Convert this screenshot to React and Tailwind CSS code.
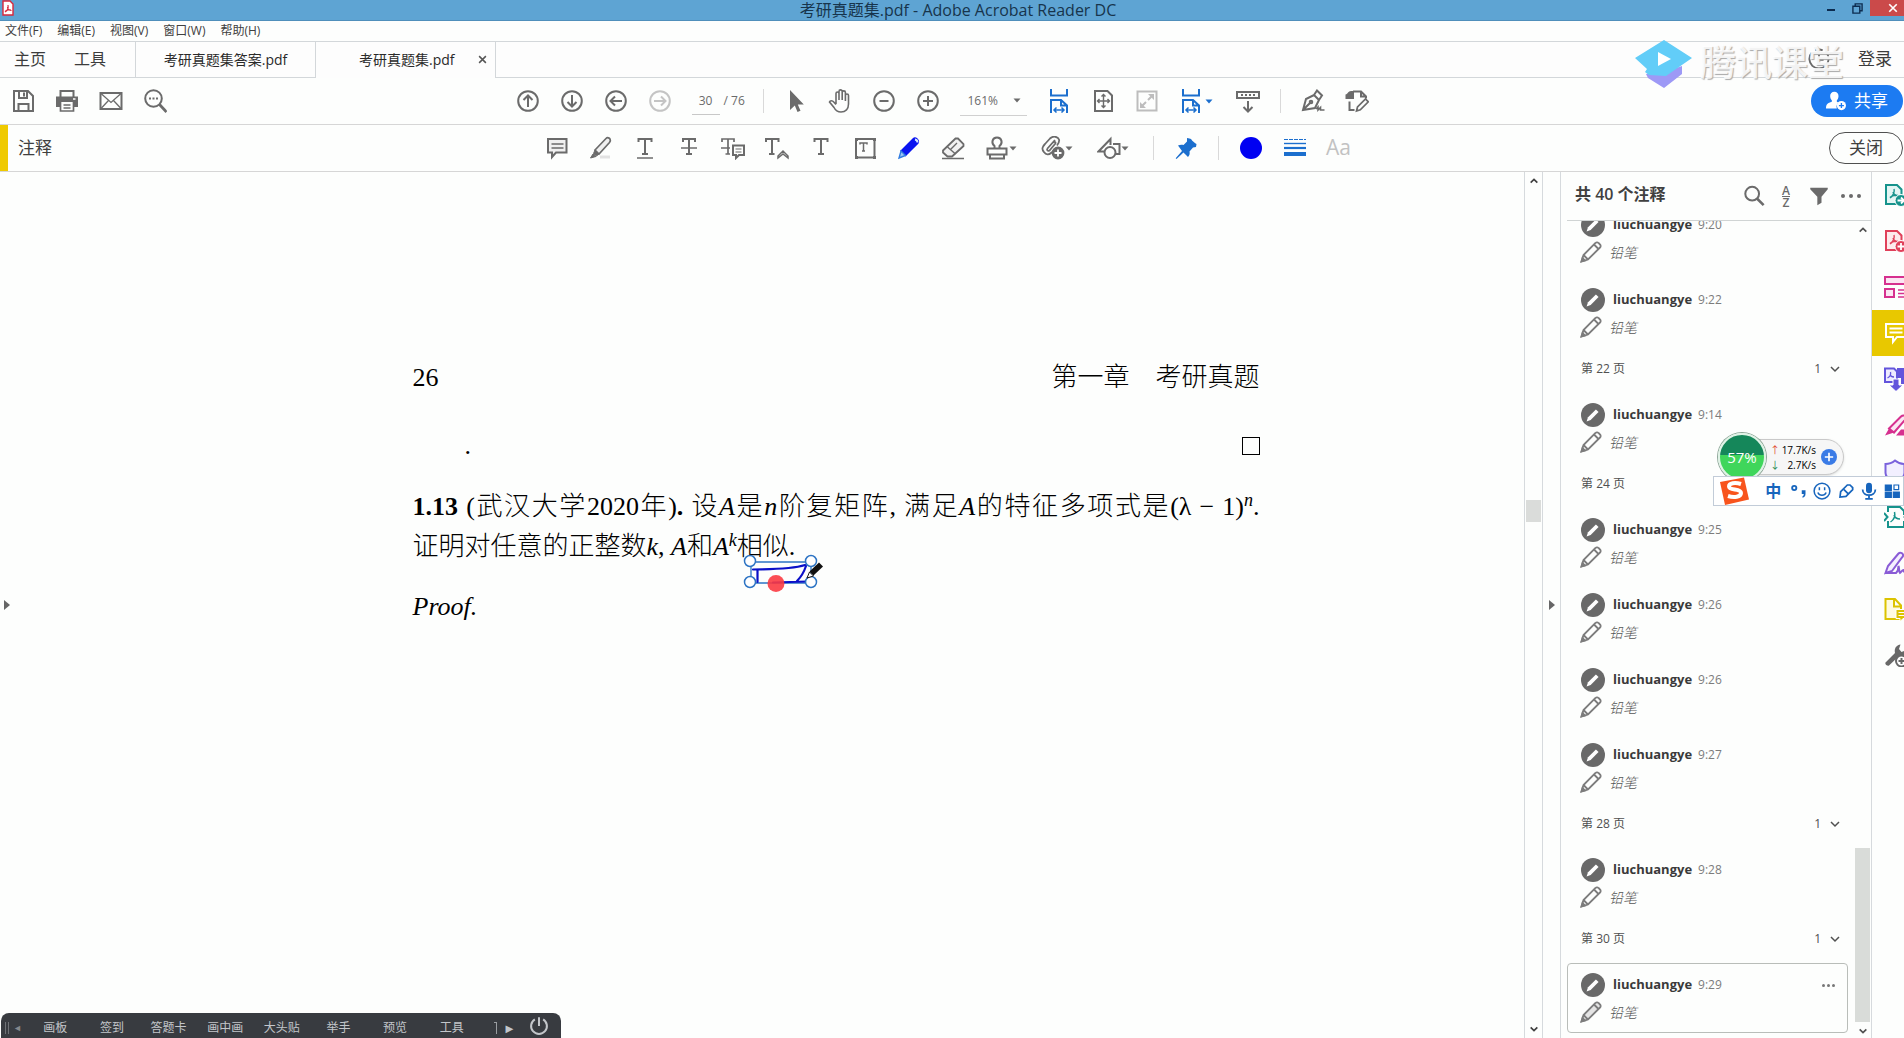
import React, { useState } from 'react';
import clsx from 'clsx';

const menus = ['文件(F)', '编辑(E)', '视图(V)', '窗口(W)', '帮助(H)'];
const classTools = ['画板', '签到', '答题卡', '画中画', '大头贴', '举手', '预览', '工具'];

const commentList = [
  { time: '9:20' },
  { time: '9:22' },
  { page: 22, count: 1 },
  { time: '9:14' },
  { page: 24, count: 1 },
  { time: '9:25' },
  { time: '9:26' },
  { time: '9:26' },
  { time: '9:27' },
  { page: 28, count: 1 },
  { time: '9:28' },
  { page: 30, count: 1 },
  { time: '9:29', selected: true },
];

const Icon = ({ children, className = 'w-6 h-6', width = 2, ...rest }) => (
  <svg
    viewBox="0 0 24 24"
    fill="none"
    stroke="currentColor"
    strokeWidth={width}
    className={clsx('flex-shrink-0', className)}
    aria-hidden="true"
    {...rest}
  >
    {children}
  </svg>
);

const ToolButton = ({ label, className = 'w-11 justify-center', children }) => (
  <button type="button" title={label} aria-label={label} className={clsx('h-11 flex items-center flex-shrink-0', className)}>
    {children}
  </button>
);

const Caret = ({ className = '' }) => (
  <svg viewBox="0 0 8 5" className={clsx('w-2 h-[5px] flex-shrink-0', className)} aria-hidden="true">
    <path d="M0.5 0.5h7L4 4.5z" fill="currentColor" />
  </svg>
);

const Divider = () => <span className="w-px h-6 mx-2.5 bg-[#d9d9d9] flex-shrink-0" />;

const Chevron = ({ up, className = 'w-3 h-3', width = 4 }) => (
  <Icon className={className} width={width}>
    <path d={up ? 'M4 16l8-8 8 8' : 'M4 8l8 8 8-8'} />
  </Icon>
);

const CircleIcon = ({ d, className }) => (
  <Icon className={clsx('w-6 h-6', className)}>
    <circle cx="12" cy="12" r="9.8" />
    <path d={d} />
  </Icon>
);

const FitWidthIcon = () => (
  <Icon className="w-6 h-6 text-[#1c6fce]">
    <path d="M4 0v6.5h16V0" />
    <path d="M4 24V11h10l6 5.500V24M14 11v5.500h6" />
    <path d="M7.500 21h9M9.500 18.500L7 21l2.500 2.500M14.500 18.500L17 21l-2.500 2.500" strokeWidth="1.500" />
  </Icon>
);

const PencilIcon = ({ filled }) => (
  <Icon className="w-6 h-6 text-[#7c7c7c]" width={1.8}>
    <path d="M2.500 21.500l2-6.500L16.500 3a2 2 0 0 1 3 0l1.500 1.500a2 2 0 0 1 0 3L9 19.500z" fill={filled ? '#e4e4e4' : 'none'} />
    <path d="M4.500 15L9 19.500M15 4.500l4.500 4.500" />
    <path d="M2.500 21.500l1-3.500 2.500 2.500z" fill="currentColor" />
  </Icon>
);

const TitleBar = () => (
  <header className="h-[21px] flex-shrink-0 flex bg-[#5ea4d3] border-b border-[#4f8fbb] text-[#17344c]">
    <div className="flex-1 pl-0.5">
      <svg viewBox="0 0 12 16" className="w-3 h-4" aria-hidden="true">
        <path d="M1 1h7l3 3v11H1z" fill="#fff" stroke="#d8273b" strokeWidth="1.400" />
        <path d="M3 12c2-1 3.500-4 3-7M5.500 7c0 2 2 3.500 4 3.500M3 11.500c1.500-1.500 4-2 6-1.500" fill="none" stroke="#d8273b" strokeWidth="1.200" />
      </svg>
    </div>
    <h1 className="pl-2.5 text-[16px] leading-5 whitespace-nowrap">考研真题集.pdf - Adobe Acrobat Reader DC</h1>
    <div className="flex-1 flex justify-end items-start">
      <button type="button" aria-label="最小化" className="w-[26px] h-4 flex justify-center items-end pb-[5px]">
        <span className="w-2 h-[2px] bg-[#0c2c50]" />
      </button>
      <button type="button" aria-label="还原" className="w-[26px] h-4 flex justify-center items-center">
        <Icon className="w-[11px] h-[11px] text-[#0c2c50]" width={3}>
          <path d="M2 7h15v15H2zM7 7V2h15v15h-5" />
        </Icon>
      </button>
      <button type="button" aria-label="关闭窗口" className="w-[34px] h-4 pl-[18px] bg-[#cb4a4a] text-white flex items-center">
        <Icon className="w-2.5 h-2.5" width={4}>
          <path d="M3 3l18 18M21 3L3 21" />
        </Icon>
      </button>
    </div>
  </header>
);

const TabBar = () => (
  <div className="h-9 flex-shrink-0 flex text-[#3c3c3c] bg-[#fdfdfd]">
    <nav className="w-[136px] flex items-center pl-3.5 pb-0.5 gap-7 border-b border-r border-[#d3d7da] text-[16px]">
      <button type="button">主页</button>
      <button type="button">工具</button>
    </nav>
    <button type="button" className="w-[180px] border-b border-r border-[#d3d7da] text-[14px] text-[#2a2a2a]">
      考研真题集答案.pdf
    </button>
    <div className="w-[180px] pl-[43px] pb-0.5 flex items-center border-r border-[#d3d7da] text-[14px] text-[#2a2a2a]">
      <button type="button">考研真题集.pdf</button>
      <button type="button" aria-label="关闭标签" className="ml-auto mr-2 text-[#555]">
        <Icon className="w-[9px] h-[9px]" width={4}>
          <path d="M3 3l18 18M21 3L3 21" />
        </Icon>
      </button>
    </div>
    <div className="flex-1 flex justify-end items-center gap-7 pr-3 pb-0.5 border-b border-[#d3d7da]">
      <button type="button" aria-label="通知">
        <Icon className="w-[22px] h-[22px] text-[#6a6a6a]">
          <path d="M4 5a10.500 10.500 0 1 0 16 0M8 2.500a10 10 0 0 1 8 0" />
          <path d="M12 7v6h5" />
        </Icon>
      </button>
      <button type="button" className="text-[17px]">登录</button>
    </div>
  </div>
);

const MainToolbar = () => {
  const [page, setPage] = useState('30');

  return (
    <div className="h-[47px] flex-shrink-0 flex items-center border-b border-[#d6d6d6] text-[#6b6b6b]">
      <div className="flex-1 flex items-center pl-px">
        <ToolButton label="保存">
          <Icon>
            <path d="M3 2h14l5 5v15H3zM7.500 22v-7h10v7M8 2v7h8V2M13 3.500v4" />
          </Icon>
        </ToolButton>
        <ToolButton label="打印">
          <Icon>
            <path d="M5.500 8V2h13v6" />
            <path d="M1 7.500h22V18h-4v-5H5v5H1z" fill="currentColor" stroke="none" />
            <path d="M5.500 13v9h13v-9M8.500 16h7M8.500 19h7" strokeWidth="1.700" />
            <path d="M18 10h2.500" stroke="#fff" strokeWidth="1.500" />
          </Icon>
        </ToolButton>
        <ToolButton label="邮件">
          <Icon>
            <path d="M1.500 4h21v16h-21z" />
            <path d="M2 4.500l10 9 10-9M2 19.500l7.500-8M22 19.500l-7.500-8" strokeWidth="1.300" />
          </Icon>
        </ToolButton>
        <ToolButton label="查找">
          <Icon>
            <circle cx="10.500" cy="9.500" r="8.300" />
            <path d="M16.500 15.500l7 7.500" strokeWidth="2.800" />
            <path d="M6 9.500h2M9.500 9.500h2M13 9.500h2" />
          </Icon>
        </ToolButton>
      </div>

      <div className="flex items-center pr-5">
        <ToolButton label="上一页"><CircleIcon d="M12 18V6.500M7.500 11L12 6.500l4.500 4.500" /></ToolButton>
        <ToolButton label="下一页"><CircleIcon d="M12 6v11.500M7.500 13l4.500 4.500 4.500-4.500" /></ToolButton>
        <ToolButton label="后退"><CircleIcon d="M18 12H6.500M11 7.500L6.500 12l4.500 4.500" /></ToolButton>
        <ToolButton label="前进"><CircleIcon className="text-[#c4c4c4]" d="M6 12h11.500M13 7.500l4.500 4.500-4.500 4.500" /></ToolButton>
        <div className="w-[71px] pl-2.5 flex items-center gap-1 text-[12px]">
          <input
            aria-label="页码"
            value={page}
            onChange={(e) => setPage(e.target.value)}
            className="w-7 h-7 text-center border-b border-[#c8c8c8] focus:outline-none"
          />
          <span>/ 76</span>
        </div>
        <Divider />
        <ToolButton label="选择">
          <Icon stroke="none">
            <path d="M6 1v20l4.800-4.500L13.500 23l3-1.200-2.700-6.300h6z" fill="currentColor" />
          </Icon>
        </ToolButton>
        <ToolButton label="手形">
          <Icon width={1.6}>
            <path d="M8 15V4.500a1.500 1.500 0 0 1 3 0V11M11 11V2.500a1.500 1.500 0 0 1 3.200 0V11M14.200 11V3.500a1.500 1.500 0 0 1 3.200 0V12M17.400 12V6.500a1.500 1.500 0 0 1 3.100 0V15c0 5-3 8-7.500 8-3.500 0-5.500-1.500-7-4.500L1.500 13c.5-1.700 3-1.700 4.300 0L8 15.500" />
          </Icon>
        </ToolButton>
        <ToolButton label="缩小"><CircleIcon d="M7.500 12h9" /></ToolButton>
        <ToolButton label="放大"><CircleIcon d="M7 12h10M12 7v10" /></ToolButton>
        <label className="relative w-[67px] mx-2.5 flex items-center text-[12px] border-b border-[#d0d0d0]">
          <select aria-label="缩放" defaultValue="161%" className="appearance-none w-full h-7 pl-2 bg-transparent focus:outline-none">
            <option>100%</option>
            <option>161%</option>
            <option>200%</option>
          </select>
          <Caret className="absolute right-1.5 pointer-events-none" />
        </label>
        <ToolButton label="适合宽度"><FitWidthIcon /></ToolButton>
        <ToolButton label="适合页面">
          <Icon>
            <path d="M4 2h12.500L21 6.500V22H4z" />
            <path d="M12.500 6v12M6.500 12h12M10.500 7.500l2-2 2 2M10.500 16.500l2 2 2-2M8.500 10l-2 2 2 2M16.500 10l2 2-2 2" strokeWidth="1.400" />
          </Icon>
        </ToolButton>
        <ToolButton label="全屏">
          <Icon className="w-6 h-6 text-[#bdbdbd]">
            <path d="M2.500 2.500h19v19h-19z" />
            <path d="M13 11l5-5M6 18l5-5" />
            <path d="M13 5h6v6zM5 13v6h6z" fill="currentColor" stroke="none" />
          </Icon>
        </ToolButton>
        <ToolButton label="页面显示" className="w-[57px] pl-2.5 gap-0.5">
          <FitWidthIcon />
          <Caret className="text-[#1c6fce]" />
        </ToolButton>
        <ToolButton label="滚动">
          <Icon>
            <path d="M1 3h22v6H1z" />
            <path d="M5 6h2M9 6h2M13 6h2M17 6h2M12 12v10M7.500 18l4.500 4.500 4.500-4.500" />
          </Icon>
        </ToolButton>
        <Divider />
        <ToolButton label="签名">
          <Icon>
            <path d="M2 21l3-11 8-4 5 5-4 8zM13 6l3-4.500 5 5-3 4.500M2 21l7.500-7.500" />
            <circle cx="10" cy="13" r="1.300" />
            <path d="M15 20l2-2v3l2.500-2.500v2.500h4" strokeWidth="1.600" />
          </Icon>
        </ToolButton>
        <ToolButton label="编辑页面">
          <Icon>
            <path d="M0.500 5.500C3 5 3 2 6 2h3v8H0.500z" fill="currentColor" stroke="none" />
            <path d="M8 2.500h8l5 5v2M16 2.500v5h5M4.500 12.500V21h5" />
            <path d="M11.500 22l1-4 8-8 2.800 2.800-8 8z" strokeWidth="1.700" />
          </Icon>
        </ToolButton>
      </div>

      <div className="flex-1 flex justify-end pr-px">
        <button type="button" className="w-[92px] h-8 rounded-full bg-[#1c7bf2] text-white text-[17px] flex items-center justify-center gap-2">
          <Icon className="w-5 h-5" stroke="none">
            <path d="M10 1c3 0 5 2 5 5 0 2-.8 4-2 5v2l2 1c-2 1.500-3 4-2 7H0c0-5 2-6.500 7-8v-2C5.800 10 5 8 5 6c0-3 2-5 5-5z" fill="#fff" />
            <circle cx="18.500" cy="17.500" r="5.500" fill="#fff" />
            <path d="M18.500 14.500v6M15.500 17.500h6" stroke="#1c7bf2" strokeWidth="1.600" />
          </Icon>
          共享
        </button>
      </div>
    </div>
  );
};

const CommentToolbar = () => (
  <div className="h-[47px] flex-shrink-0 flex items-center border-b border-[#d6d6d6] text-[#6b6b6b]">
    <div className="flex-1 self-stretch flex items-center border-l-8 border-[#efca00]">
      <h2 className="pl-2.5 text-[17px] text-[#404040]">注释</h2>
    </div>

    <div className="flex items-center pr-4">
      <ToolButton label="添加附注">
        <Icon>
          <path d="M3 3h18.500v13.500H11L7 21v-4.500H3z" fill="#f0f0f0" />
          <path d="M6.500 8h12M6.500 12h12" strokeWidth="1.500" />
        </Icon>
      </ToolButton>
      <ToolButton label="高亮文本">
        <Icon>
          <path d="M6 14L17 2.500c1.500-1.500 3.500-.5 4 .5.800 1.500.3 2.500-.5 3.500L10 18z" fill="#f0f0f0" strokeWidth="1.700" />
          <path d="M6 14l4 4-2.500 2-3-2.500zM4 18l3 2.500-5.500 1.500z" fill="currentColor" strokeWidth="1" />
          <path d="M11 21h10" stroke="#e2e2e2" strokeWidth="3" />
        </Icon>
      </ToolButton>
      <ToolButton label="下划线">
        <Icon>
          <path d="M5.500 6V3h13v3M12 3v15M9 18h6" />
          <path d="M4 22h16" strokeWidth="1.500" />
        </Icon>
      </ToolButton>
      <ToolButton label="删除线">
        <Icon>
          <path d="M6 6V3h12v3M12 3v15M9 18h6" />
          <path d="M4 12h16" strokeWidth="1.500" />
        </Icon>
      </ToolButton>
      <ToolButton label="替换文本">
        <Icon>
          <path d="M1 6V3h12v3M7 3v15M4.500 18H9M0 12h9" strokeWidth="1.700" />
          <path d="M12 9.500h11V19h-5l-3 3v-3h-3z" />
          <path d="M14.500 13h6M14.500 16h6" strokeWidth="1.200" />
        </Icon>
      </ToolButton>
      <ToolButton label="插入文本">
        <Icon>
          <path d="M1 6V3h12.500v3M7 3v15M4 18h5.500" />
          <path d="M13 20l5-5 5 5v2l-5-4-5 4z" strokeWidth="1.500" />
        </Icon>
      </ToolButton>
      <ToolButton label="添加文本">
        <Icon>
          <path d="M5.500 6V3h13v3M12 3v15M9 18h6" />
        </Icon>
      </ToolButton>
      <ToolButton label="文本框">
        <Icon>
          <path d="M3 3h18.500v18.500H3z" />
          <path d="M7 8.500V7h7v1.500M10.500 7v8M9 15h3" strokeWidth="1.500" />
          <path d="M2 2h3v3H2zM20 2h3v3h-3zM2 20h3v3H2zM20 20h3v3h-3z" fill="currentColor" stroke="none" />
        </Icon>
      </ToolButton>
      <ToolButton label="铅笔">
        <Icon className="w-6 h-6 text-[#0a14f0]" width={1.4}>
          <path d="M4 15L16.500 2.500c2-2 6 2 4.500 4.500L8.500 19.500z" fill="currentColor" />
          <path d="M4 15l4.500 4.500L2 22z" fill="#9cc4f5" stroke="#2f7be0" />
          <path d="M18 3.500a3 3 0 0 1 2.500 3" stroke="#d5e8ff" strokeWidth="2" />
        </Icon>
      </ToolButton>
      <ToolButton label="橡皮擦">
        <Icon width={1.8}>
          <path d="M2 14.500L14.500 2.500h2.500l5.500 5.500v2L11 20.500H6.500L2 16.500z" fill="#f2f2f2" />
          <path d="M6.500 11l8 7M9 14l7-7M1 22.500h22" strokeWidth="1.400" />
        </Icon>
      </ToolButton>
      <ToolButton label="图章" className="w-14 pl-2.5">
        <Icon>
          <path d="M9.500 12.500V10C6 7.500 7 1.500 12 1.500S18 7.500 14.500 10v2.500M2.500 12.500h19v6h-19zM5 18.500v4h14v-4" />
        </Icon>
        <Caret />
      </ToolButton>
      <ToolButton label="附件" className="w-14 pl-2.5">
        <Icon width={1.8}>
          <path d="M6 13l8-9M3 16C0 13 2 10 4 8l5-5.500c3-3 8-2 9 1 .7 2-.5 4-2 6M3 16c2 3 5 3 7 1l1-1M6 13c0 2 2 2.500 3 1l5-6c1.500-2-.5-3-2-1.500" />
          <circle cx="17" cy="17" r="5.500" fill="currentColor" />
          <path d="M17 13.500v7M13.500 17h7" stroke="#fff" />
        </Icon>
        <Caret />
      </ToolButton>
      <ToolButton label="绘图" className="w-14 pl-2.5">
        <Icon>
          <path d="M8 15.500H1.500L13.500 3v6M16 8h6.500v10H19" />
          <circle cx="13" cy="16.500" r="5.500" />
        </Icon>
        <Caret />
      </ToolButton>
      <Divider />
      <ToolButton label="保持选定">
        <Icon className="w-6 h-6 text-[#1c6fce]" stroke="none">
          <path d="M13 2c2 0 3 1 4 1 1.500 2.500 4 4 5.500 5l-.5 3-3 .5-3.500 4c.5 2 0 4-1.500 5.500l-4.500-4.500-7 6.500-.8-.8 6.300-7.200L4 9.500C6 8.500 8 8.500 9.500 9L13 5.500z" fill="currentColor" />
        </Icon>
      </ToolButton>
      <Divider />
      <ToolButton label="颜色">
        <span className="w-[22px] h-[22px] rounded-full bg-[#0000f2]" />
      </ToolButton>
      <ToolButton label="线宽">
        <Icon className="w-6 h-6 text-[#1c6fce]">
          <path d="M1 3.500h22" strokeWidth="1" strokeDasharray="4 1" />
          <path d="M1 7.500h22" strokeWidth="1.400" />
          <path d="M1 12h22" strokeWidth="2.200" />
          <path d="M1 18h22" strokeWidth="4" />
        </Icon>
      </ToolButton>
      <ToolButton label="文本属性">
        <span className="text-[21px] text-[#c2c2c2]">Aa</span>
      </ToolButton>
    </div>

    <div className="flex-1 flex justify-end pr-px">
      <button type="button" className="w-[74px] h-8 rounded-full border border-[#505050] text-[17px] text-[#404040]">关闭</button>
    </div>
  </div>
);

/* Free-hand mark with its selection handles and the pencil cursor */
const InkAnnotation = () => (
  <svg viewBox="0 0 84 42" className="absolute left-[330px] top-[26px] w-[84px] h-[42px]" aria-hidden="true">
    <path d="M8 9h60v21H8z" fill="none" stroke="#2d74c4" strokeWidth="1.300" />
    <path d="M10 16.500c18-.5 38 0 52-4.500M14.500 17v12M63 13c-2 6-5 11-9 15M30 29.500l34-1" fill="none" stroke="#0b10c8" strokeWidth="2.200" strokeLinecap="round" />
    <g fill="#fff" stroke="#2d74c4" strokeWidth="1.500">
      <circle cx="7" cy="8" r="5.500" />
      <circle cx="68" cy="8" r="5.500" />
      <circle cx="7" cy="29" r="5.500" />
      <circle cx="68" cy="29" r="5.500" />
    </g>
    <circle cx="33" cy="30.500" r="8.500" fill="#fb3b42" fillOpacity=".9" />
    <path d="M64 25l2.500-6 4 4z" fill="#fff" stroke="#111" strokeWidth="1" />
    <path d="M66.500 18.500L76 9.500l4 4-9.500 9z" fill="#111" />
  </svg>
);

const DocumentPage = () => (
  <article className="flex-1 min-w-0 pt-[186px] pl-[134px] text-black font-['Liberation_Serif','Noto_Sans_CJK_SC',serif]">
    <div className="w-[847px] mx-auto text-[26px] leading-10 font-light">
      <div className="flex justify-between">
        <span>26</span>
        <span>第一章&emsp;考研真题</span>
      </div>
      <div className="flex justify-between items-center pt-7 pl-[52px]">
        <span>.</span>
        <span className="w-[18px] h-[18px] border-[1.5px] border-black" />
      </div>
      <p className="pt-[21px] [text-align-last:justify] whitespace-nowrap">
        <b className="font-bold">1.13</b> (武汉大学2020年)<b className="font-bold">.</b> 设<i>A</i>是<i>n</i>阶复矩阵, 满足<i>A</i>的特征多项式是(λ − 1)<sup className="text-[18px] leading-none"><i>n</i></sup>.
      </p>
      <div className="relative">
        <p className="whitespace-nowrap">
          证明对任意的正整数<i>k</i>, <i>A</i>和<i>A</i><sup className="text-[18px] leading-none"><i>k</i></sup>相似.
        </p>
        <InkAnnotation />
      </div>
      <p className="pt-5 italic">Proof.</p>
    </div>
  </article>
);

const Comment = ({ time, selected }) => (
  <li className={clsx('h-[70px] mb-[5px] mr-[7px] flex-shrink-0 rounded border pl-[13px] pt-[9px]', selected ? 'border-[#b9bdb9]' : 'border-transparent')}>
    <div className="h-6 flex items-center">
      <span className="w-6 h-6 rounded-full bg-[#696969] flex items-center justify-center">
        <Icon className="w-[14px] h-[14px]" stroke="none">
          <path d="M1 23l2.500-7L17 2.500 21.500 7 8 20.500z" fill="#fff" />
        </Icon>
      </span>
      <b className="ml-2 text-[13px] text-[#3a3a3a]">liuchuangye</b>
      <span className="ml-1.5 text-[12px] text-[#7c7c7c]">{time}</span>
      {selected && (
        <button type="button" aria-label="更多选项" className="ml-auto mr-[9px] w-5 h-3 flex items-center justify-center gap-0.5">
          <i className="w-[3px] h-[3px] rounded-full bg-[#777]" />
          <i className="w-[3px] h-[3px] rounded-full bg-[#777]" />
          <i className="w-[3px] h-[3px] rounded-full bg-[#777]" />
        </button>
      )}
    </div>
    <div className="h-6 mt-[3px] flex items-center">
      <span className="-ml-0.5"><PencilIcon filled={selected} /></span>
      <span className="ml-1.5 text-[14px] italic font-light text-[#555]">铅笔</span>
    </div>
  </li>
);

const CommentsPanel = () => (
  <aside className="w-[311px] flex-shrink-0 flex flex-col border-r border-[#d6dadd]">
    <div className="h-[49px] ml-1.5 flex-shrink-0 flex items-center pl-2 pr-2.5 border-b border-[#d0d4d4] text-[#6b6b6b]">
      <h3 className="text-[16px] font-semibold text-[#404040] mb-1">共 40 个注释</h3>
      <button type="button" aria-label="搜索注释" className="ml-auto">
        <Icon className="w-[22px] h-[22px]" width={2.2}>
          <circle cx="10" cy="9.500" r="7.500" />
          <path d="M15.500 15l7 7" strokeWidth="2.800" />
        </Icon>
      </button>
      <button type="button" aria-label="排序" className="w-[22px] ml-2.5 flex flex-col items-center text-[12px] leading-[11px] font-semibold">
        <span className="border-b border-[#6b6b6b]">A</span>
        <span>Z</span>
      </button>
      <button type="button" aria-label="筛选" className="ml-3">
        <Icon className="w-5 h-5" stroke="none">
          <path d="M1.500 2h21v2L15 13v7l-5 3V13L1.500 4z" fill="currentColor" />
        </Icon>
      </button>
      <button type="button" aria-label="更多" className="w-5 ml-3 flex justify-between">
        <i className="w-1 h-1 rounded-full bg-[#6b6b6b]" />
        <i className="w-1 h-1 rounded-full bg-[#6b6b6b]" />
        <i className="w-1 h-1 rounded-full bg-[#6b6b6b]" />
      </button>
    </div>
    <div className="flex-1 min-h-0 flex">
      <ul className="flex-1 min-w-0 pl-1.5 flex flex-col justify-end overflow-hidden">
        {commentList.map((item, idx) =>
          item.page ? (
            <li key={idx} className="h-10 flex-shrink-0 flex items-center pl-3.5 pr-3.5 pb-2 text-[12px] text-[#505050]">
              <span>第 {item.page} 页</span>
              <span className="ml-auto mr-2">{item.count}</span>
              <Chevron className="w-3 h-3" width={3} />
            </li>
          ) : (
            <Comment key={idx} time={item.time} selected={item.selected} />
          )
        )}
      </ul>
      <div className="w-4 flex-shrink-0 flex flex-col items-center justify-between text-[#505050] pt-1 pb-0.5">
        <Chevron up className="w-2.5 h-2.5" />
        <div className="w-full flex-1 flex items-end py-1">
          <div className="w-[15px] h-[174px] bg-[#d9dcd9]" />
        </div>
        <Chevron className="w-2.5 h-2.5" />
      </div>
    </div>
  </aside>
);

const pdfGlyph = 'M6 15c3-2 5-6 4-9M9 9c1 3 3 4 6 4M6 14.500c2-2 5-2.500 8-2';

const ToolRail = () => (
  <nav className="w-8 flex-shrink-0 overflow-hidden [&>button]:w-8 [&>button]:h-[46px] [&>button]:pl-3 [&>button]:flex [&>button]:items-center">
    <button type="button" aria-label="导出 PDF" className="text-[#16938c]">
      <Icon>
        <path d="M2 2h11l4.500 4.500V21H2z" fill="#e3f6f4" />
        <path d={pdfGlyph} strokeWidth="1.400" />
        <circle cx="17" cy="17.500" r="6" fill="currentColor" stroke="#fff" strokeWidth="1" />
        <path d="M13.500 17.500h7M17 14.500l3 3-3 3" stroke="#fff" strokeWidth="1.800" />
      </Icon>
    </button>
    <button type="button" aria-label="创建 PDF" className="text-[#e0405a]">
      <Icon>
        <path d="M2 2h11l4.500 4.500V21H2z" fill="#fdeaec" />
        <path d={pdfGlyph} strokeWidth="1.400" />
        <circle cx="17" cy="17.500" r="6" fill="currentColor" stroke="#fff" strokeWidth="1" />
        <path d="M13.500 17.500h7M17 14v7" stroke="#fff" strokeWidth="1.800" />
      </Icon>
    </button>
    <button type="button" aria-label="组织页面" className="text-[#d6308f]">
      <Icon>
        <path d="M1 2h24v7H1zM1 14h9v8H1z" fill="#fbe6f3" />
        <path d="M14 15h10M14 18.500h10M14 22h10" strokeWidth="1.500" />
      </Icon>
    </button>
    <button type="button" aria-label="注释" className="bg-[#e8c800] text-white">
      <Icon>
        <path d="M2 3h20v13h-9l-4 5v-5H2z" />
        <path d="M5.500 7.500h13M5.500 11.500h13" />
      </Icon>
    </button>
    <button type="button" aria-label="合并文件" className="text-[#6355dc]">
      <Icon>
        <path d="M1 1.500h9l3 3V15H1z" fill="#eeebff" />
        <path d="M3.500 11c2-1 3.500-3.500 3-6M6 7.500c.5 1.500 2 2.500 4 2.500" strokeWidth="1.300" />
        <path d="M13 1h11v16h-7v-6h-4z" fill="currentColor" stroke="none" />
        <path d="M9 12h6v6h4l-7 6.500L5 18h4z" fill="currentColor" stroke="#fff" strokeWidth="1" />
      </Icon>
    </button>
    <button type="button" aria-label="密文" className="text-[#d6308f]">
      <Icon>
        <path d="M5 15.500L17 3.500c2-2 5-1 6 1l-13 15z" fill="#fbe6f3" />
        <path d="M5 15.500l5 4-9 3zM12 22.500l5-6h7v6z" fill="currentColor" stroke="none" />
      </Icon>
    </button>
    <button type="button" aria-label="保护" className="text-[#7a62dc]">
      <Icon>
        <path d="M11 1.500c3 2.500 6 3.500 9.500 3.500v9c0 4-4 7-9.500 9-5.500-2-9.500-5-9.500-9V5c3.500 0 6.500-1 9.500-3.500z" fill="#f2efff" />
      </Icon>
    </button>
    <button type="button" aria-label="压缩 PDF" className="text-[#16938c]">
      <Icon>
        <path d="M4 7V2h12l4 4v4M4 16v6h16v-6" fill="none" />
        <path d="M0 8l3.500 4L0 16M24 8l-3.500 4 3.500 4" />
        <path d="M6.500 17c3-2 5-6 4-10M10 10c1 3 3 4 6 4" strokeWidth="1.500" />
      </Icon>
    </button>
    <button type="button" aria-label="填写和签名" className="text-[#8a5cd6]">
      <Icon>
        <path d="M1.500 22l2.500-7L14.500 2.500c1.500-1.500 4-.5 4.500 1 .4 1 0 2-1 3L8 20z" fill="#f5efff" />
        <path d="M1.500 22H12c2-2 2.500-5 2.500-7 1 2 0 5 1.500 7 1.500-1 2-3 3.500-3 0 2 1 3 4.500 3" />
      </Icon>
    </button>
    <button type="button" aria-label="发送以供注释" className="text-[#dcc300]">
      <Icon>
        <path d="M1.500 2H11l6 6.500V22H1.500zM10 2v7.500h7" fill="#fffbe0" />
        <path d="M12 12.500h12v9h-5l-3 3v-3h-4z" fill="currentColor" stroke="#fff" strokeWidth="1" />
        <path d="M14.500 15.500h8M14.500 18.500h8" stroke="#fff" strokeWidth="1.200" />
      </Icon>
    </button>
    <button type="button" aria-label="更多工具" className="text-[#686868]">
      <Icon>
        <path d="M1.500 19.500L11 10c-1-4 1-8 5.500-8.500L15 6l2.500 3 4.500-2c0 4-3 7-7.500 6.500L5 22.500c-1.500 1-4.500-1.500-3.500-3z" fill="currentColor" stroke="none" />
        <circle cx="17.500" cy="18" r="5.500" fill="#fff" />
        <path d="M14.500 18h6M17.500 15v6" />
      </Icon>
    </button>
  </nav>
);

const Watermark = () => (
  <div className="absolute right-[60px] top-[38px] flex items-center gap-2 pointer-events-none">
    <svg viewBox="0 0 58 50" className="w-[58px] h-[50px]" aria-hidden="true">
      <path d="M12 36l30-6 6-2v8L30 50 14 40z" fill="#9d99f6" />
      <path d="M30 2l28 18-26 18-17-1-4-3 2-3L1 20z" fill="#62cdf8" />
      <path d="M24 14l13 7-13 7z" fill="#fff" />
    </svg>
    <span className="text-[36px] leading-[44px] font-medium text-white/85 [text-shadow:1px_1px_1px_#a8a8a8]">腾讯课堂</span>
  </div>
);

const SpeedMeter = () => (
  <div className="absolute right-[60px] top-[433px] w-[126px] h-12 flex items-center">
    <div className="absolute inset-y-1.5 left-6 right-0 rounded-full border border-[#c9c9c9] bg-[#f6f6f6] shadow" />
    <div className="relative flex-shrink-0 w-12 h-12 rounded-full border-2 border-[#dff3e6] ring-1 ring-[#8ba596] bg-linear-to-b from-[#15875a] from-45% to-[#3fd65b] to-45% text-white text-[15px] flex items-center justify-center">
      57%
    </div>
    <dl className="relative ml-1 pt-0.5 w-[46px] text-[10px] leading-[15px] text-black">
      <div className="flex justify-between"><dt className="text-[#e0452f]">↑</dt><dd>17.7K/s</dd></div>
      <div className="flex justify-between"><dt className="text-[#2a8a55]">↓</dt><dd>2.7K/s</dd></div>
    </dl>
    <button type="button" aria-label="加速" className="relative ml-[5px] w-4 h-4 rounded-full bg-[#3a7be6] text-white flex items-center justify-center">
      <Icon className="w-2.5 h-2.5" width={4}>
        <path d="M12 2v20M2 12h20" />
      </Icon>
    </button>
  </div>
);

const InputMethodBar = () => (
  <div className="absolute right-0 top-[476px] h-[30px] w-[191px] pl-[5px] pr-[3px] flex items-center justify-between bg-white border border-[#c2ccd8] text-[#1765bd]">
    <svg viewBox="0 0 30 28" className="w-[30px] h-7" aria-hidden="true">
      <path d="M1 5L25 0.500l5 22L6 28z" fill="#f8541d" />
      <path d="M22 7c-6-2-12-1-12 2.500 0 4.500 12 1.500 12 6.500 0 4-7 5-13 3" fill="none" stroke="#fff" strokeWidth="4" />
    </svg>
    <button type="button" className="w-5 ml-2 text-[16px] leading-5 font-bold">中</button>
    <button type="button" aria-label="中文标点">
      <Icon className="w-[18px] h-[18px]" width={2.5}>
        <circle cx="7" cy="8" r="2.800" />
        <path d="M17 11h5v5c0 3-1.500 4.500-4 5v-2c1-.5 1.700-1.500 1.700-3H17z" fill="currentColor" stroke="none" />
      </Icon>
    </button>
    <button type="button" aria-label="表情">
      <Icon className="w-[18px] h-[18px]">
        <circle cx="12" cy="12" r="10.500" />
        <path d="M8.500 7v4M15.500 7v4M6.500 14c2 5 9 5 11 0" />
      </Icon>
    </button>
    <button type="button" aria-label="手写">
      <Icon className="w-4 h-4" width={2.6}>
        <path d="M3 21l1-8L14 3h4l4 4v3L12 20zM9 10l6 6" />
      </Icon>
    </button>
    <button type="button" aria-label="语音">
      <Icon className="w-[18px] h-[18px]" width={2.4}>
        <rect x="8" y="1" width="8" height="14" rx="4" fill="currentColor" stroke="none" />
        <path d="M3.500 10c0 10 17 10 17 0M12 18v4.500M7 22.500h10" />
      </Icon>
    </button>
    <button type="button" aria-label="工具箱">
      <Icon className="w-4 h-4" width={1.8}>
        <path d="M2 3h9v8H2zM2 13.500h9v8H2zM14 13.500h9v8h-9z" fill="currentColor" />
        <path d="M15 3h7v7h-7z" />
      </Icon>
    </button>
  </div>
);

const ClassroomBar = () => (
  <div className="absolute left-px bottom-0 w-[560px] h-[25px] rounded-t-lg bg-[#383b40] text-[#c3c6ca] text-[12px] flex items-center pl-1 pr-3 pt-1">
    <span className="w-1 h-3 border-x border-[#6f7276]" />
    <span className="w-2.5 ml-1 text-[9px] text-[#85888c]">◄</span>
    <div className="flex-1 flex ml-1">
      {classTools.map((tool) => (
        <button key={tool} type="button" className="flex-1 text-center">{tool}</button>
      ))}
    </div>
    <span className="ml-3.5 w-[3px] h-3 border-r border-t border-[#9a9da1]" />
    <span className="w-3 ml-1.5 mr-3.5 text-[13px] leading-4">►</span>
    <button type="button" aria-label="下课" className="pb-1">
      <Icon className="w-5 h-5" width={2.4}>
        <path d="M12 1.500V12M7 4a9.500 9.500 0 1 0 10 0" />
      </Icon>
    </button>
  </div>
);

const App = () => (
  <div className="relative h-screen flex flex-col overflow-hidden bg-[#fdfefd] font-['Open_Sans','Noto_Sans_CJK_SC',sans-serif]">
    <TitleBar />
    <nav className="h-[21px] flex-shrink-0 flex items-center gap-[15px] pl-[5px] border-b border-[#d3d7da] text-[12px] text-[#404040]">
      {menus.map((menu) => (
        <button key={menu} type="button">{menu}</button>
      ))}
    </nav>
    <TabBar />
    <MainToolbar />
    <CommentToolbar />

    <main className="flex-1 min-h-0 flex">
      <button type="button" aria-label="展开导航窗格" className="w-3.5 flex-shrink-0 flex items-center justify-center">
        <svg viewBox="0 0 6 10" className="w-1.5 h-2.5" aria-hidden="true"><path d="M0 0l6 5-6 5z" fill="#666" /></svg>
      </button>
      <DocumentPage />
      <div className="w-[19px] flex-shrink-0 border-x border-[#d6dadd] flex flex-col items-center text-[#404040] py-1">
        <Chevron up className="w-2.5 h-2.5" />
        <div className="flex-1 w-full pt-[314px] px-px">
          <div className="h-[22px] bg-[#dadcda]" />
        </div>
        <Chevron className="w-2.5 h-2.5" />
      </div>
      <button type="button" aria-label="折叠注释窗格" className="w-[18px] flex-shrink-0 border-r border-[#d6dadd] flex items-center justify-center">
        <svg viewBox="0 0 6 10" className="w-1.5 h-2.5" aria-hidden="true"><path d="M0 0l6 5-6 5z" fill="#666" /></svg>
      </button>
      <CommentsPanel />
      <ToolRail />
    </main>

    <Watermark />
    <SpeedMeter />
    <InputMethodBar />
    <ClassroomBar />
  </div>
);

export default App;
